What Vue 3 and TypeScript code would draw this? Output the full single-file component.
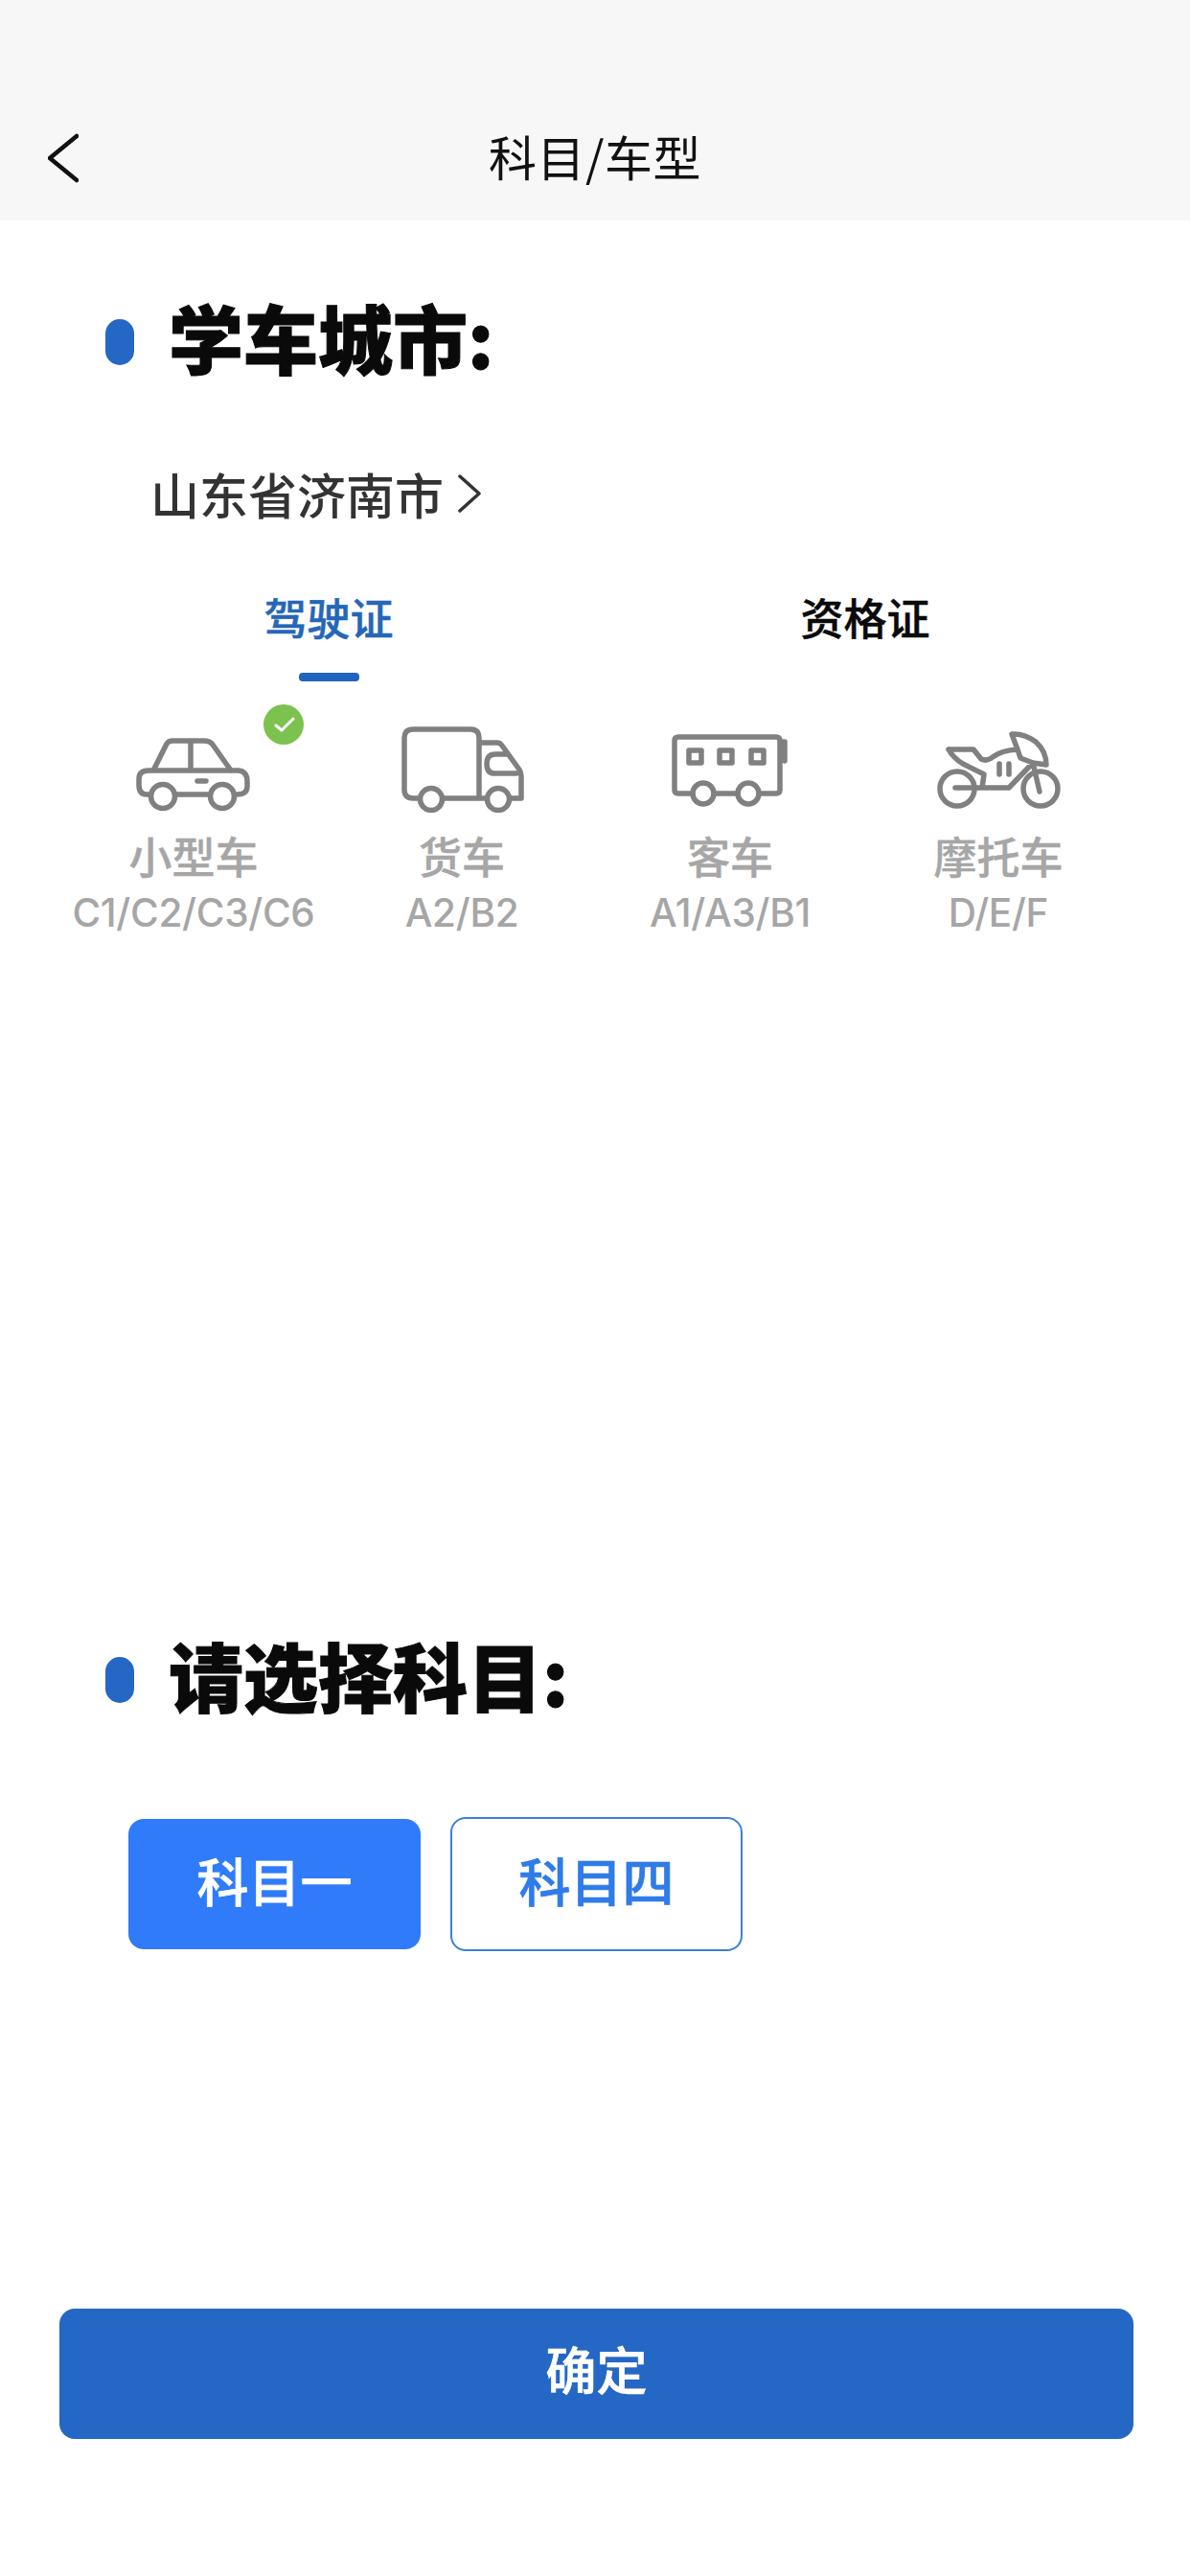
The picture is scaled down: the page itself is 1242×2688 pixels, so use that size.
<script setup lang="ts">
interface Vehicle {
  name: string
  codes: string
  path: string
  circles: [number, number, number][]
  selected?: boolean
}

const vehicles: Vehicle[] = [
  {
    name: '小型车',
    codes: 'C1/C2/C3/C6',
    selected: true,
    path: 'M20 71H16Q8 71 8 61V55Q8 46 18 46H112Q121 47 121 57V63Q121 71 110 71H108M46 71H82M23 46L37 18Q39 15 43 15H76Q82 15 85 19L104 46M62 15V46M69 57H78',
    circles: [[33, 73, 12.5], [95, 73, 12.5]]
  },
  {
    name: '货车',
    codes: 'A2/B2',
    path: 'M21 75H14Q5 75 5 66V12Q5 3 14 3H74Q83 3 83 12V75M46 75H91M83 17H102Q105 17 107 20L125 45Q127 48 127 52V75H115M122 49H99Q91 49 91 39Q91 29 100 29H112',
    circles: [[33, 76, 11.5], [103, 76, 11.5]]
  },
  {
    name: '客车',
    codes: 'A1/A3/B1',
    path: 'M26 70H11Q7 70 7 66V15Q7 11 11 11H113Q117 11 117 15V66Q117 70 113 70H95M48 70H73M117 16H122V36M22 25H35V38H22ZM54 25H67V38H54ZM87 25H100V38H87Z',
    circles: [[37, 70, 11], [84, 70, 11]]
  },
  {
    name: '摩托车',
    codes: 'D/E/F',
    path: 'M13 24H39L47 34Q53 37 59 32Q68 25 85 24L79 8Q92 7 104 16Q115 26 115 40L101 38L88 33L85 24M13 24Q18 33 28 39L50 50L48 64H76L101 38L108 68M20 64H48M66 39V50M76 39V50',
    circles: [[22, 65, 18], [109, 65, 18]]
  }
]
</script>

<template>
  <div class="page">
    <header class="nav">
      <svg class="back" viewBox="0 0 32 52" width="32" height="52" aria-hidden="true">
        <path d="M30 3L2 26L30 49" />
      </svg>
      <div class="nav-title">科目/车型</div>
      <div class="nav-spacer"></div>
    </header>

    <section class="heading first">
      <span class="dot"></span>
      <h2>学车城市:</h2>
    </section>

    <div class="city">
      <span>山东省济南市</span>
      <svg viewBox="0 0 24 42" width="24" height="42" aria-hidden="true">
        <path d="M2 3L22 21L2 39" />
      </svg>
    </div>

    <div class="tabs">
      <div class="tab active">
        <span>驾驶证</span>
        <i class="tab-bar"></i>
      </div>
      <div class="tab"><span>资格证</span></div>
    </div>

    <div class="vehicles">
      <div v-for="v in vehicles" :key="v.name" class="vehicle">
        <span v-if="v.selected" class="badge">
          <svg viewBox="0 0 42 42" width="42" height="42" aria-hidden="true">
            <path d="M13 22L19 27L31 15" />
          </svg>
        </span>
        <svg class="vehicle-icon" viewBox="0 0 130 90" width="130" height="90" aria-hidden="true">
          <path :d="v.path" />
          <circle v-for="(c, i) in v.circles" :key="i" :cx="c[0]" :cy="c[1]" :r="c[2]" />
        </svg>
        <div class="vehicle-name">{{ v.name }}</div>
        <div class="vehicle-codes">{{ v.codes }}</div>
      </div>
    </div>

    <section class="heading second">
      <span class="dot"></span>
      <h2>请选择科目:</h2>
    </section>

    <div class="subjects">
      <button class="subject on">科目一</button>
      <button class="subject off">科目四</button>
    </div>

    <button class="confirm">确定</button>
  </div>
</template>

<style>
html, body { margin: 0; background: #fff; }
</style>

<style scoped>
.page {
  width: 1242px;
  height: 2688px;
  display: flex;
  flex-direction: column;
  background: #fff;
  font-family: "Noto Sans CJK SC", "Noto Sans", sans-serif;
  overflow: hidden;
}
.nav {
  height: 230px;
  box-sizing: border-box;
  padding: 100px 50px 0;
  display: flex;
  align-items: center;
  background: #f7f7f7;
}
.back, .nav-spacer { width: 32px; flex: none; }
.back path {
  fill: none;
  stroke: #111;
  stroke-width: 4.5;
  stroke-linecap: round;
  stroke-linejoin: round;
}
.nav-title {
  flex: 1;
  padding-bottom: 6px;
  text-align: center;
  font-size: 50px;
  line-height: 60px;
  letter-spacing: 0.5px;
  color: #111;
}
.heading {
  display: flex;
  align-items: center;
  gap: 36px;
  padding-left: 110px;
}
.heading.first { margin-top: 82px; }
.heading.second { margin-top: 730px; }
.dot {
  width: 30px;
  height: 48px;
  border-radius: 15px;
  background: #2567c5;
  flex: none;
}
.heading h2 {
  margin: 0;
  padding-bottom: 12px;
  font-size: 78px;
  line-height: 78px;
  font-weight: 900;
  color: #0a0a0a;
  -webkit-text-stroke: 1px #0a0a0a;
}
.city {
  margin-top: 83px;
  padding-left: 157px;
  display: flex;
  align-items: center;
  gap: 15px;
  font-size: 51px;
  line-height: 60px;
  font-weight: 500;
  color: #333;
}
.city path {
  fill: none;
  stroke: #333;
  stroke-width: 3.5;
  stroke-linecap: round;
  stroke-linejoin: round;
}
.tabs {
  margin: 69px 0 0 63px;
  width: 1120px;
  display: grid;
  grid-template-columns: 1fr 1fr;
}
.tab {
  display: flex;
  flex-direction: column;
  align-items: center;
  font-size: 45px;
  line-height: 60px;
  font-weight: 500;
  color: #0a0a0a;
  -webkit-text-stroke: 0.5px currentColor;
}
.tab.active { color: #2567b8; }
.tab-bar {
  display: block;
  width: 63px;
  height: 9px;
  margin-top: 28px;
  border-radius: 4px;
  background: #2163bd;
}
.vehicles {
  margin: 47px 0 0 62px;
  width: 1120px;
  display: grid;
  grid-template-columns: repeat(4, 1fr);
}
.vehicle {
  position: relative;
  display: flex;
  flex-direction: column;
  align-items: center;
}
.vehicle-icon path, .vehicle-icon circle {
  fill: none;
  stroke: #808080;
  stroke-width: 5.5;
  stroke-linecap: round;
  stroke-linejoin: round;
}
.badge {
  position: absolute;
  left: 213px;
  top: -23px;
  width: 42px;
  height: 42px;
  border-radius: 50%;
  background: #7cc24e;
}
.badge svg { display: block; }
.badge path {
  fill: none;
  stroke: #fff;
  stroke-width: 3;
  stroke-linecap: round;
  stroke-linejoin: round;
}
.vehicle-name {
  margin-top: 17px;
  font-size: 45px;
  line-height: 56px;
  font-weight: 500;
  color: #a6a6a6;
  -webkit-text-stroke: 0.4px #a6a6a6;
}
.vehicle-codes {
  margin-top: 7px;
  font-family: Inter, "Noto Sans", sans-serif;
  font-size: 40.5px;
  line-height: 50px;
  font-weight: 500;
  letter-spacing: -0.3px;
  color: #a6a6a6;
  white-space: nowrap;
}
.subjects {
  margin-top: 98px;
  padding-left: 134px;
  display: flex;
  align-items: center;
  gap: 31px;
}
.subject {
  width: 305px;
  height: 136px;
  box-sizing: border-box;
  padding: 0 0 10px;
  border: none;
  border-radius: 16px;
  font-family: inherit;
  font-size: 54px;
  font-weight: 500;
  -webkit-text-stroke: 0.7px currentColor;
}
.subject.on { background: #2f7bfa; color: #fff; }
.subject.off {
  height: 140px;
  background: #fff;
  border: 2px solid #3a7fdc;
  color: #2f7be8;
}
.confirm {
  margin: auto 0 143px 62px;
  width: 1121px;
  height: 136px;
  padding: 0 0 12px;
  border: none;
  border-radius: 16px;
  background: #2567c5;
  color: #fff;
  font-family: inherit;
  font-size: 53px;
  font-weight: 500;
  -webkit-text-stroke: 0.7px #fff;
}
</style>
